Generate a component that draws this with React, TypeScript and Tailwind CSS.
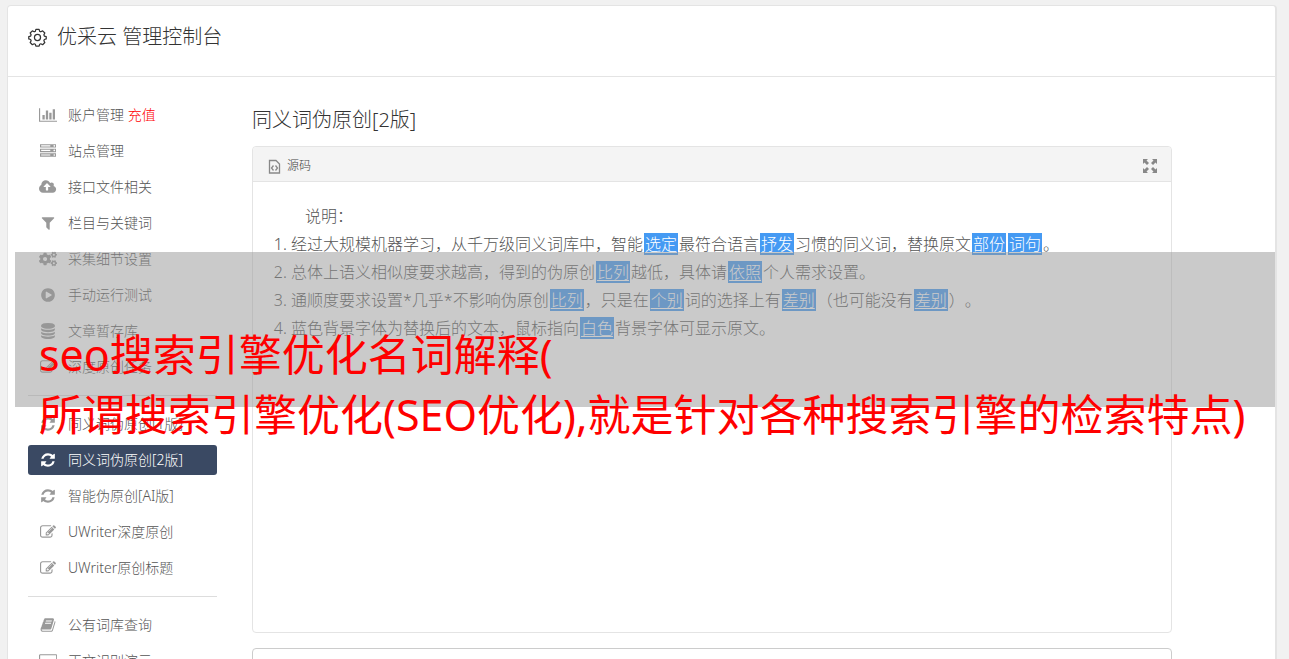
import { FaCogs } from 'react-icons/fa';

const icons = {
  chart: {
    width: 2048,
    path: 'M640 896v512h-256v-512h256zm384-512v1024h-256v-1024h256zm1024 1152v128h-2048v-1536h128v1408h1920zm-640-896v768h-256v-768h256zm384-384v1152h-256v-1152h256z',
  },
  server: {
    width: 1792,
    path: 'M128 1408h1024v-128h-1024v128zm0-512h1024v-128h-1024v128zm1568 448q0-40-28-68t-68-28-68 28-28 68 28 68 68 28 68-28 28-68zm-1568-960h1024v-128h-1024v128zm1568 448q0-40-28-68t-68-28-68 28-28 68 28 68 68 28 68-28 28-68zm0-512q0-40-28-68t-68-28-68 28-28 68 28 68 68 28 68-28 28-68zm96 832v384h-1792v-384h1792zm0-512v384h-1792v-384h1792zm0-512v384h-1792v-384h1792z',
  },
  upload: {
    width: 1920,
    path: 'M1280 864q0-14-9-23l-352-352q-9-9-23-9t-23 9l-351 351q-10 12-10 24 0 14 9 23t23 9h224v352q0 13 9.5 22.5t22.5 9.5h192q13 0 22.5-9.5t9.5-22.5v-352h224q13 0 22.5-9.5t9.5-22.5zm640 288q0 159-112.5 271.5t-271.5 112.5h-1088q-185 0-316.5-131.5t-131.5-316.5q0-130 70-240t188-165q-2-30-2-43 0-212 150-362t362-150q156 0 285.5 87t188.5 231q71-62 166-62 106 0 181 75t75 181q0 76-41 138 130 31 213.5 135.5t83.5 238.5z',
  },
  filter: {
    width: 1792,
    path: 'M1595 295q17 41-14 70l-493 493v742q0 42-39 59-13 5-25 5-27 0-45-19l-256-256q-19-19-19-45v-486l-493-493q-31-29-14-70 17-39 59-39h1280q42 0 59 39z',
  },
  play: {
    width: 1792,
    path: 'M896 128q209 0 385.5 103t279.5 279.5 103 385.5-103 385.5-279.5 279.5-385.5 103-385.5-103-279.5-279.5-103-385.5 103-385.5 279.5-279.5 385.5-103zm384 823q32-18 32-55t-32-55l-544-320q-31-19-64-1-32 19-32 56v640q0 37 32 56 16 8 32 8 17 0 32-9z',
  },
  database: {
    width: 1792,
    path: 'M896 768q237 0 443-43t325-127v170q0 69-103 128t-280 93.5-385 34.5-385-34.5-280-93.5-103-128v-170q119 84 325 127t443 43zm0 768q237 0 443-43t325-127v170q0 69-103 128t-280 93.5-385 34.5-385-34.5-280-93.5-103-128v-170q119 84 325 127t443 43zm0-384q237 0 443-43t325-127v170q0 69-103 128t-280 93.5-385 34.5-385-34.5-280-93.5-103-128v-170q119 84 325 127t443 43zm0-1152q208 0 385 34.5t280 93.5 103 128v128q0 69-103 128t-280 93.5-385 34.5-385-34.5-280-93.5-103-128v-128q0-69 103-128t280-93.5 385-34.5z',
  },
  edit: {
    width: 1792,
    path: 'M888 1184l116-116-152-152-116 116v56h96v96h56zm440-720q-16-16-33 1l-350 350q-17 17-1 33t33-1l350-350q17-17 1-33zm80 594v190q0 119-84.5 203.5t-203.5 84.5h-832q-119 0-203.5-84.5t-84.5-203.5v-832q0-119 84.5-203.5t203.5-84.5h832q63 0 117 25 15 7 18 23 3 17-9 29l-49 49q-14 14-32 8-23-6-45-6h-832q-66 0-113 47t-47 113v832q0 66 47 113t113 47h832q66 0 113-47t47-113v-126q0-13 9-22l64-64q15-15 35-7t20 29zm-96-738l288 288-672 672h-288v-288zm444 132l-92 92-288-288 92-92q28-28 68-28t68 28l152 152q28 28 28 68t-28 68z',
  },
  refresh: {
    width: 1792,
    path: 'M1639 1056q0 5-1 7-64 268-268 434.5t-478 166.5q-146 0-282.5-55t-243.5-157l-129 129q-19 19-45 19t-45-19-19-45v-448q0-26 19-45t45-19h448q26 0 45 19t19 45-19 45l-137 137q71 66 161 102t187 36q134 0 250-65t186-179q11-17 53-117 8-23 30-23h192q13 0 22.5 9.5t9.5 22.5zm25-800v448q0 26-19 45t-45 19h-448q-26 0-45-19t-19-45 19-45l138-138q-148-137-349-137-134 0-250 65t-186 179q-11 17-53 117-8 23-30 23h-199q-13 0-22.5-9.5t-9.5-22.5v-7q65-268 270-434.5t480-166.5q146 0 284 55.5t245 156.5l130-129q19-19 45-19t45 19 19 45z',
  },
  book: {
    width: 1792,
    path: 'M1703 478q40 57 18 129l-275 906q-19 64-76.5 107.5t-122.5 43.5h-923q-77 0-148.5-53.5t-99.5-131.5q-24-67-2-127 0-4 3-27t4-37q1-8-3-21.5t-3-19.5q2-11 8-21t16.5-23.5 16.5-23.5q23-38 45-91.5t30-91.5q3-10 .5-30t-.5-28q3-11 17-28t17-23q21-36 42-92t25-90q1-9-2.5-32t.5-28q4-13 22-30.5t22-22.5q19-26 42.5-84.5t27.5-96.5q1-8-3-25.5t-2-26.5q2-8 9-18t18-23 17-21q8-12 16.5-30.5t15-35 16-36 19.5-32 26.5-23.5 36-11.5 47.5 5.5l-1 3q38-9 51-9h761q74 0 114 56t18 130l-274 906q-36 119-71.5 153.5t-128.5 34.5h-869q-27 0-38 15-11 16-1 43 24 70 144 70h923q29 0 56-15.5t35-41.5l300-987q7-22 5-57 38 15 59 43zm-1064 2q-4 13 2 22.5t20 9.5h608q13 0 25.5-9.5t16.5-22.5l21-64q4-13-2-22.5t-20-9.5h-608q-13 0-25.5 9.5t-16.5 22.5zm-83 256q-4 13 2 22.5t20 9.5h608q13 0 25.5-9.5t16.5-22.5l21-64q4-13-2-22.5t-20-9.5h-608q-13 0-25.5 9.5t-16.5 22.5z',
  },
  desktop: {
    width: 2048,
    path: 'M160 128h1728q66 0 113 47t47 113v1088q0 66-47 113t-113 47h-1728q-66 0-113-47t-47-113v-1088q0-66 47-113t113-47zm0 128q-32 0-32 32v832h1792v-832q0-32-32-32h-1728z',
  },
};

type IconName = keyof typeof icons | 'cogs';

interface MenuEntry {
  label: string;
  icon: IconName;
  extra?: string;
  active?: boolean;
}

const menuGroups: MenuEntry[][] = [
  [
    { label: '账户管理', icon: 'chart', extra: '充值' },
    { label: '站点管理', icon: 'server' },
    { label: '接口文件相关', icon: 'upload' },
    { label: '栏目与关键词', icon: 'filter' },
    { label: '采集细节设置', icon: 'cogs' },
    { label: '手动运行测试', icon: 'play' },
    { label: '文章暂存库', icon: 'database' },
    { label: '深度原创任务', icon: 'edit' },
  ],
  [
    { label: '同义词伪原创[1版]', icon: 'refresh' },
    { label: '同义词伪原创[2版]', icon: 'refresh', active: true },
    { label: '智能伪原创[AI版]', icon: 'refresh' },
    { label: 'UWriter深度原创', icon: 'edit' },
    { label: 'UWriter原创标题', icon: 'edit' },
  ],
  [
    { label: '公有词库查询', icon: 'book' },
    { label: '正文识别演示', icon: 'desktop' },
  ],
];

function MenuIcon({ name }: { name: IconName }) {
  if (name === 'cogs') return <FaCogs className="h-[18px] w-[18px]" />;
  const { width, path } = icons[name];
  return (
    <svg viewBox={`0 0 ${width} 1792`} className="h-4 w-auto" fill="currentColor" aria-hidden="true">
      <path d={path} />
    </svg>
  );
}

function Sidebar() {
  return (
    <nav className="w-[189px] shrink-0 text-sm">
      {menuGroups.map((group, i) => (
        <ul
          key={i}
          className={`flex flex-col gap-1.5 ${i > 0 ? 'mt-[13px] border-t border-[#ddd] pt-[13px]' : ''}`}
        >
          {group.map((item) => (
            <li key={item.label}>
              <a
                href="#"
                className={`flex h-[30px] items-center gap-2.5 whitespace-nowrap rounded-[3px] pl-2.5 ${
                  item.active ? 'bg-[#3a4963] text-white' : 'text-[#555]'
                }`}
              >
                <span className={`flex w-5 justify-center ${item.active ? 'text-white' : 'text-[#999]'}`}>
                  <MenuIcon name={item.icon} />
                </span>
                <span>
                  {item.label}
                  {item.extra && <span className="text-[#f00]"> {item.extra}</span>}
                </span>
              </a>
            </li>
          ))}
        </ul>
      ))}
    </nav>
  );
}

// A replaced word: white on blue, underlined
function Word({ children }: { children: string }) {
  return <span className="mx-px bg-[#459af3] px-px text-white underline underline-offset-2">{children}</span>;
}

function Editor() {
  return (
    <section className="rounded border border-[#e4e4e4]">
      <div className="flex h-[35px] items-center justify-between rounded-t border-b border-[#e4e4e4] bg-[#f4f4f4] px-3.5 pt-1 text-xs text-[#444]">
        <button className="flex items-center gap-1.5">
          <svg width="14" height="16" viewBox="0 0 14 16" fill="none" stroke="#888" aria-hidden="true">
            <path d="M2.500 2.500h6.500l3.500 3.500v9h-10z" strokeWidth="1.300" />
            <path d="M6.500 7.500l-2 2.500 2 2.500M8.500 7.500l2 2.500-2 2.500" strokeWidth="1.300" />
          </svg>
          源码
        </button>
        <button aria-label="全屏">
          <svg width="14" height="14" viewBox="0 0 14 14" fill="#888" aria-hidden="true">
            <path d="M0 0h5L3.500 1.500 6 4 4 6 1.500 3.500 0 5zM14 0v5l-1.500-1.500L10 6 8 4l2.500-2.500L9 0zM0 14V9l1.500 1.500L4 8l2 2-2.500 2.500L5 14zM14 14H9l1.500-1.500L8 10l2-2 2.500 2.500L14 9z" />
          </svg>
        </button>
      </div>
      <div className="min-h-[450px] px-5 pt-5 text-base leading-7 text-[#555]">
        <p className="pl-8">说明：</p>
        <ol className="list-decimal pl-[18px]">
          <li>
            经过大规模机器学习，从千万级同义词库中，智能<Word>选定</Word>最符合语言<Word>抒发</Word>
            习惯的同义词，替换原文<Word>部份</Word>
            <Word>词句</Word>。
          </li>
          <li>
            总体上语义相似度要求越高，得到的伪原创<Word>比列</Word>越低，具体请<Word>依照</Word>个人需求设置。
          </li>
          <li>
            通顺度要求设置*几乎*不影响伪原创<Word>比列</Word>，只是在<Word>个别</Word>词的选择上有
            <Word>差别</Word>（也可能没有<Word>差别</Word>）。
          </li>
          <li>
            蓝色背景字体为替换后的文本，鼠标指向<Word>白色</Word>背景字体可显示原文。
          </li>
        </ol>
      </div>
    </section>
  );
}

export default function App() {
  return (
    <div className="relative flex h-screen overflow-hidden bg-[#f1f1f1] pl-[7px] pr-3 pt-[5px] font-['Noto_Sans','Noto_Sans_CJK_SC',sans-serif] font-light [text-spacing-trim:space-all]">
      <div className="min-w-0 flex-1 rounded-t border border-r-2 border-b-0 border-[#e4e4e4] bg-white">
        <header className="flex h-[71px] items-center gap-2.5 border-b border-[#e4e4e4] pb-2 pl-5 text-[#333]">
          <svg width="19" height="19" viewBox="0 0 20 20" fill="none" stroke="#333" strokeWidth="1.300" strokeLinejoin="round" aria-hidden="true">
            <path d="M8.300 1.500h3.400l.6 2 1.200.5 1.900-1 2.300 2.300-1 1.900.5 1.300 2 .6v2.400l-2 .6-.5 1.300 1 1.900-2.300 2.300-1.900-1-1.200.5-.6 2H8.300l-.6-2-1.200-.5-1.900 1-2.300-2.300 1-1.900-.5-1.300-2-.6V9.100l2-.6.5-1.300-1-1.900 2.300-2.300 1.900 1 1.200-.5z" />
            <circle cx="10" cy="10" r="3.200" />
          </svg>
          <h1 className="text-xl">优采云 管理控制台</h1>
        </header>
        <div className="flex gap-[35px] pl-5 pr-[103px] pt-[23px]">
          <Sidebar />
          <main className="min-w-0 flex-1 pt-1.5">
            <h2 className="mb-3 text-xl leading-7 text-[#333]">同义词伪原创[2版]</h2>
            <Editor />
            <textarea
              aria-label="原文"
              className="mt-[15px] block h-40 w-full resize-none rounded border border-[#ccc] bg-white p-3"
            />
          </main>
        </div>
      </div>

      {/* Caption band laid over the console */}
      <div className="absolute left-[15px] right-[14px] top-[252px] h-[155px] bg-[#969696]/50 px-6 pt-[73px]">
        <p className="whitespace-nowrap text-[43px] font-normal leading-[60px] text-[#f00]">
          seo搜索引擎优化名词解释(
          <br />
          所谓搜索引擎优化(SEO优化),就是针对各种搜索引擎的检索特点)
        </p>
      </div>
    </div>
  );
}
